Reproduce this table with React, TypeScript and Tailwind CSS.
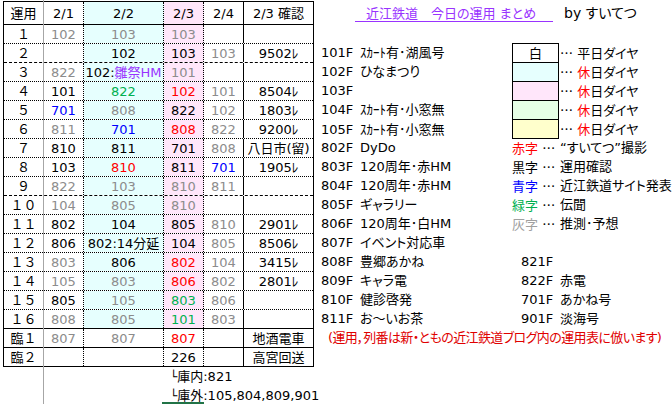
import React from 'react';

type Tone = 'k' | 'g' | 'b' | 'r' | 'gr';
type Line = 'dot' | 'dash' | 'solid';
type Val = [string, Tone] | 'hm' | null;

interface OpsRow {
  id: string;
  d: Val[];
  check: string;
  line: Line;
  plain?: boolean;
}

const toneClass: Record<Tone, string> = {
  k: 'text-black',
  g: 'text-[#8c8c8c]',
  b: 'text-[#0000ff]',
  r: 'text-[#ff0000]',
  gr: 'text-[#00b050]',
};

const lineClass: Record<Line, string> = {
  dot: 'border-dotted',
  dash: 'border-dashed',
  solid: 'border-solid',
};

// right border of each column
const colBorder = [
  'border-r border-[#a6a6a6]',
  'border-r border-dotted border-black',
  'border-r border-dotted border-black',
  'border-r border-dotted border-black',
  'border-r border-black',
  '',
];

const tint = ['', '', 'bg-[#e6fffe]', 'bg-[#ffe6fa]', '', ''];

const rows: OpsRow[] = [
  { id: '１', d: [['102', 'g'], ['103', 'g'], ['103', 'g'], null], check: '', line: 'dot' },
  { id: '２', d: [null, ['102', 'k'], ['103', 'k'], ['103', 'g']], check: '9502ﾚ', line: 'dash' },
  { id: '３', d: [['822', 'g'], 'hm', ['101', 'g'], null], check: '', line: 'dot' },
  { id: '４', d: [['101', 'k'], ['822', 'gr'], ['102', 'r'], ['101', 'g']], check: '8504ﾚ', line: 'dot' },
  { id: '５', d: [['701', 'b'], ['808', 'g'], ['822', 'k'], ['102', 'g']], check: '1803ﾚ', line: 'dot' },
  { id: '６', d: [['811', 'g'], ['701', 'b'], ['808', 'r'], ['822', 'g']], check: '9200ﾚ', line: 'dot' },
  { id: '７', d: [['810', 'k'], ['811', 'k'], ['701', 'k'], ['808', 'g']], check: '八日市(留)', line: 'dot' },
  { id: '８', d: [['103', 'k'], ['810', 'r'], ['811', 'k'], ['701', 'b']], check: '1905ﾚ', line: 'dot' },
  { id: '９', d: [['822', 'g'], ['103', 'g'], ['810', 'g'], ['811', 'g']], check: '', line: 'dash' },
  { id: '１０', d: [['104', 'g'], ['805', 'g'], ['810', 'g'], null], check: '', line: 'dot' },
  { id: '１１', d: [['802', 'k'], ['104', 'k'], ['805', 'k'], ['810', 'g']], check: '2901ﾚ', line: 'dot' },
  { id: '１２', d: [['806', 'k'], ['802:14分延', 'k'], ['104', 'k'], ['805', 'g']], check: '8506ﾚ', line: 'dot' },
  { id: '１３', d: [['803', 'g'], ['806', 'k'], ['802', 'r'], ['104', 'g']], check: '3415ﾚ', line: 'dot' },
  { id: '１４', d: [['105', 'g'], ['803', 'g'], ['806', 'r'], ['802', 'g']], check: '2801ﾚ', line: 'dot' },
  { id: '１５', d: [['805', 'k'], ['105', 'g'], ['803', 'gr'], ['806', 'g']], check: '', line: 'dot' },
  { id: '１６', d: [['808', 'g'], ['805', 'g'], ['101', 'gr'], ['803', 'g']], check: '', line: 'solid' },
  { id: '臨１', d: [['807', 'g'], ['807', 'g'], ['807', 'r'], null], check: '地酒電車', line: 'solid', plain: true },
  { id: '臨２', d: [null, null, ['226', 'k'], null], check: '高宮回送', line: 'solid', plain: true },
];

const Dots = () => <span className="font-['Noto_Sans_CJK_JP',sans-serif]">…</span>;

const renderVal = (v: Val) => {
  if (v === 'hm') {
    return (
      <span>
        102:<span className="text-[#9933ff]">雛祭HM</span>
      </span>
    );
  }
  if (!v) return null;
  return <span className={toneClass[v[1]]}>{v[0]}</span>;
};

const OpsTable = () => (
  <div className="w-[311px] border-t border-x border-black">
    <div className="grid grid-cols-[40px_40px_80px_40px_40px_69px] h-[23px] border-b border-black">
      {['運用', '2/1', '2/2', '2/3', '2/4', '2/3 確認'].map((h, i) => (
        <div key={h} className={`flex items-center justify-center ${colBorder[i]} ${tint[i]}`}>
          {h}
        </div>
      ))}
    </div>
    {rows.map((r) => {
      const cells = [r.id, ...r.d.map(renderVal), r.check];
      return (
        <div
          key={r.id}
          className={`grid grid-cols-[40px_40px_80px_40px_40px_69px] h-[19px] border-b border-black ${lineClass[r.line]}`}
        >
          {cells.map((c, i) => (
            <div
              key={i}
              className={`flex items-center justify-center whitespace-nowrap ${colBorder[i]} ${r.plain ? '' : tint[i]}`}
            >
              {c}
            </div>
          ))}
        </div>
      );
    })}
  </div>
);

const fleet: { code: string; name: string }[] = [
  { code: '101F', name: 'ｽｶｰﾄ有･湖風号' },
  { code: '102F', name: 'ひなまつり' },
  { code: '103F', name: '' },
  { code: '104F', name: 'ｽｶｰﾄ有･小窓無' },
  { code: '105F', name: 'ｽｶｰﾄ有･小窓無' },
  { code: '802F', name: 'DyDo' },
  { code: '803F', name: '120周年･赤HM' },
  { code: '804F', name: '120周年･赤HM' },
  { code: '805F', name: 'ギャラリー' },
  { code: '806F', name: '120周年･白HM' },
  { code: '807F', name: 'イベント対応車' },
  { code: '808F', name: '豊郷あかね' },
  { code: '809F', name: 'キャラ電' },
  { code: '810F', name: '健診啓発' },
  { code: '811F', name: 'お～いお茶' },
];

const boxes = [
  { bg: 'bg-white', label: '白', holiday: false },
  { bg: 'bg-[#e6fffe]', label: '', holiday: true },
  { bg: 'bg-[#ffe6fa]', label: '', holiday: true },
  { bg: 'bg-[#e6ffe6]', label: '', holiday: true },
  { bg: 'bg-[#ffffcc]', label: '', holiday: true },
];

const inks = [
  { tag: '赤字', color: 'text-[#ff0000]', text: '“すいてつ”撮影' },
  { tag: '黒字', color: 'text-black', text: '運用確認' },
  { tag: '青字', color: 'text-[#0000ff]', text: '近江鉄道サイト発表' },
  { tag: '緑字', color: 'text-[#00b050]', text: '伝聞' },
  { tag: '灰字', color: 'text-[#a0a0a0]', text: '推測･予想' },
];

const extra = [
  { code: '821F', name: '' },
  { code: '822F', name: '赤電' },
  { code: '701F', name: 'あかね号' },
  { code: '901F', name: '淡海号' },
];

const Legend = () => (
  <div className="flex-1 flex flex-col whitespace-nowrap [font-feature-settings:'palt']">
    <div className="h-[24px] flex items-start pt-[7px] pl-[34px]">
      <span className="w-[198px] pl-[11px] leading-[14px] border-b border-[#9933ff] text-[#9933ff]">
        近江鉄道　今日の運用 まとめ
      </span>
      <span className="ml-[11px] -mt-[1px] text-[14px] leading-[14px]">by すいてつ</span>
    </div>
    <div className="h-[19px]" />
    {fleet.map((f, i) => (
      <div key={f.code} className="grid grid-cols-[39px_152px_48px_1fr] h-[19px] items-center">
        <span>{f.code}</span>
        <span>{f.name}</span>
        {i < 5 && (
          <>
            <div
              className={`self-start w-[47px] border-t border-x border-black flex items-center justify-center ${boxes[i].bg} ${i === 4 ? 'h-[20px] border-b' : 'h-[19px]'}`}
            >
              {boxes[i].label}
            </div>
            <span>
              <Dots />{' '}
              {boxes[i].holiday ? <span className="text-[#ff0000]">休</span> : '平'}日ダイヤ
            </span>
          </>
        )}
        {i >= 5 && i < 10 && (
          <>
            <span>
              <span className={inks[i - 5].color}>{inks[i - 5].tag}</span> <Dots />
            </span>
            <span>{inks[i - 5].text}</span>
          </>
        )}
        {i >= 11 && (
          <>
            <span className="pl-[9px]">{extra[i - 11].code}</span>
            <span>{extra[i - 11].name}</span>
          </>
        )}
      </div>
    ))}
    <div className="h-[19px] flex items-center pl-[7px] text-[#e00000] tracking-[-0.6px]">
      (運用，列番は新・ともの近江鉄道ブログ内の運用表に倣います)
    </div>
  </div>
);

export default function App() {
  return (
    <div className="relative w-[672px] h-[404px] overflow-hidden bg-white text-black text-[13px] leading-none font-['DejaVu_Sans','Noto_Sans_CJK_JP',sans-serif]">
      <div className="flex items-start">
        <div className="ml-[3px] mt-[1px] w-[311px]">
          <OpsTable />
          <div className="pl-[167px] whitespace-nowrap">
            <div className="h-[19px] flex items-center">
              <span className="text-[12px]">└</span>庫内:821
            </div>
            <div className="h-[19px] flex items-center">
              <span className="text-[12px]">└</span>庫外:105,804,809,901
            </div>
          </div>
        </div>
        <div className="ml-[7px] flex-1 min-w-0">
          <Legend />
        </div>
      </div>
      {/* frozen pane line */}
      <div className="absolute left-[43px] top-0 w-px h-full bg-[#a6a6a6]" />
      {/* active cell edge */}
      <div className="absolute left-[162px] top-[402px] w-[42px] h-[2px] bg-[#217346]" />
    </div>
  );
}
